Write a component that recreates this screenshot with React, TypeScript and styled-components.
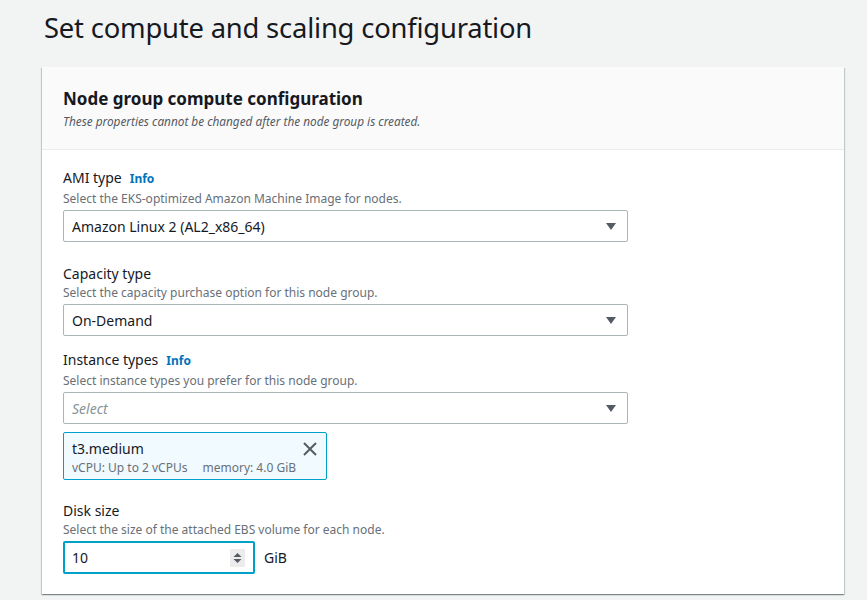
import React from "react";
import styled, { createGlobalStyle } from "styled-components";

const Global = createGlobalStyle`
  html, body { margin: 0; padding: 0; background: #f2f3f3; }
  body { font-family: "Noto Sans", "Open Sans", Arial, sans-serif; color: #16191f; }
  * { box-sizing: border-box; }
`;

const Page = styled.div`
  padding: 8px 23px 0 42px;
  width: 867px;
  height: 600px;
  overflow: hidden;
`;

const Title = styled.h1`
  margin: 0 0 0 2px;
  font-size: 27.4px;
  font-weight: 400;
  line-height: 40px;
  color: #16191f;
  letter-spacing: -0.2px;
`;

const Card = styled.section`
  margin-top: 19px;
  width: 802px;
  background: #ffffff;
  box-shadow: 0 1px 1px 0 rgba(0, 28, 36, 0.3), 1px 1px 1px 0 rgba(0, 28, 36, 0.15),
    -1px 1px 1px 0 rgba(0, 28, 36, 0.15);
`;

const CardHeader = styled.header`
  background: #fafafa;
  border-bottom: 1px solid #eaeded;
  padding: 19px 21px 19px;
`;

const CardTitle = styled.h2`
  margin: 0;
  font-size: 17px;
  font-weight: 700;
  line-height: 26px;
  color: #16191f;
`;

const CardSubtitle = styled.p`
  margin: 0;
  font-size: 11.8px;
  font-style: italic;
  line-height: 18px;
  color: #545b64;
`;

const CardBody = styled.div`
  padding: 17px 21px 20px;
  display: flex;
  flex-direction: column;
`;

const Field = styled.div<{ $gap?: number }>`
  display: flex;
  flex-direction: column;
  margin-top: ${(p) => p.$gap ?? 0}px;
`;

const LabelRow = styled.div<{ $info?: boolean }>`
  display: flex;
  align-items: baseline;
  gap: 8px;
  line-height: 22px;
  min-height: ${(p) => (p.$info ? 24 : 22)}px;
`;

const Label = styled.span`
  font-size: 14px;
  color: #16191f;
`;

const Info = styled.a`
  font-size: 12px;
  font-weight: 700;
  color: #0073bb;
  text-decoration: none;
`;

const Description = styled.span`
  font-size: 12px;
  line-height: 16px;
  color: #687078;
  margin-bottom: 3px;
`;

const SelectBox = styled.div<{ $placeholder?: boolean }>`
  width: 565px;
  height: 32px;
  border: 1px solid #aab7b8;
  border-radius: 2px;
  background: #fff;
  display: flex;
  align-items: center;
  justify-content: space-between;
  padding: 0 11px 0 8px;
  font-size: 14px;
  color: ${(p) => (p.$placeholder ? "#879596" : "#16191f")};
  font-style: ${(p) => (p.$placeholder ? "italic" : "normal")};
`;

const Caret = styled.svg`
  width: 10px;
  height: 7px;
  flex: none;
`;

const Token = styled.div`
  margin-top: 8px;
  width: 264px;
  height: 48px;
  background: #f1faff;
  border: 1px solid #00a1c9;
  border-radius: 2px;
  padding: 5px 9px 0 8px;
  display: flex;
  justify-content: space-between;
  align-items: flex-start;
`;

const TokenText = styled.div`
  display: flex;
  flex-direction: column;
`;

const TokenName = styled.span`
  font-size: 14px;
  line-height: 22px;
  color: #16191f;
`;

const TokenMeta = styled.div`
  display: flex;
  gap: 15px;
  font-size: 12px;
  line-height: 16px;
  color: #687078;
`;

const Dismiss = styled.svg`
  width: 14px;
  height: 14px;
  margin-top: 4px;
`;

const InputRow = styled.div`
  display: flex;
  align-items: center;
  gap: 9px;
`;

const NumberBox = styled.div`
  width: 192px;
  height: 33px;
  border: 2px solid #00a1c9;
  border-radius: 2px;
  background: #fff;
  display: flex;
  align-items: center;
  justify-content: space-between;
  padding: 0 8px 0 7px;
  font-size: 14px;
  color: #16191f;
`;

const Spinner = styled.div`
  width: 15px;
  height: 18px;
  background: #ececec;
  border-radius: 1px;
  display: flex;
  align-items: center;
  justify-content: center;
`;

const Unit = styled.span`
  font-size: 14px;
  color: #16191f;
`;

const CaretIcon = () => (
  <Caret viewBox="0 0 10 7">
    <path d="M0 0 H10 L5 7 Z" fill="#545b64" />
  </Caret>
);

export default function App() {
  return (
    <Page>
      <Global />
      <Title>Set compute and scaling configuration</Title>
      <Card>
        <CardHeader>
          <CardTitle>Node group compute configuration</CardTitle>
          <CardSubtitle>These properties cannot be changed after the node group is created.</CardSubtitle>
        </CardHeader>
        <CardBody>
          <Field>
            <LabelRow $info>
              <Label>AMI type</Label>
              <Info>Info</Info>
            </LabelRow>
            <Description>Select the EKS-optimized Amazon Machine Image for nodes.</Description>
            <SelectBox>
              <span>Amazon Linux 2 (AL2_x86_64)</span>
              <CaretIcon />
            </SelectBox>
          </Field>
          <Field $gap={21}>
            <LabelRow>
              <Label>Capacity type</Label>
            </LabelRow>
            <Description>Select the capacity purchase option for this node group.</Description>
            <SelectBox>
              <span>On-Demand</span>
              <CaretIcon />
            </SelectBox>
          </Field>
          <Field $gap={13}>
            <LabelRow $info>
              <Label>Instance types</Label>
              <Info>Info</Info>
            </LabelRow>
            <Description>Select instance types you prefer for this node group.</Description>
            <SelectBox $placeholder>
              <span>Select</span>
              <CaretIcon />
            </SelectBox>
            <Token>
              <TokenText>
                <TokenName>t3.medium</TokenName>
                <TokenMeta>
                  <span>vCPU: Up to 2 vCPUs</span>
                  <span>memory: 4.0 GiB</span>
                </TokenMeta>
              </TokenText>
              <Dismiss viewBox="0 0 14 14">
                <path d="M1 1 L13 13 M13 1 L1 13" stroke="#545b64" strokeWidth="2" />
              </Dismiss>
            </Token>
          </Field>
          <Field $gap={20}>
            <LabelRow>
              <Label>Disk size</Label>
            </LabelRow>
            <Description>Select the size of the attached EBS volume for each node.</Description>
            <InputRow>
              <NumberBox>
                <span>10</span>
                <Spinner>
                  <svg width="9" height="12" viewBox="0 0 9 12">
                    <path d="M0.5 5 L4.5 1 L8.5 5 Z M0.5 7 L4.5 11 L8.5 7 Z" fill="#545b64" />
                  </svg>
                </Spinner>
              </NumberBox>
              <Unit>GiB</Unit>
            </InputRow>
          </Field>
        </CardBody>
      </Card>
    </Page>
  );
}
